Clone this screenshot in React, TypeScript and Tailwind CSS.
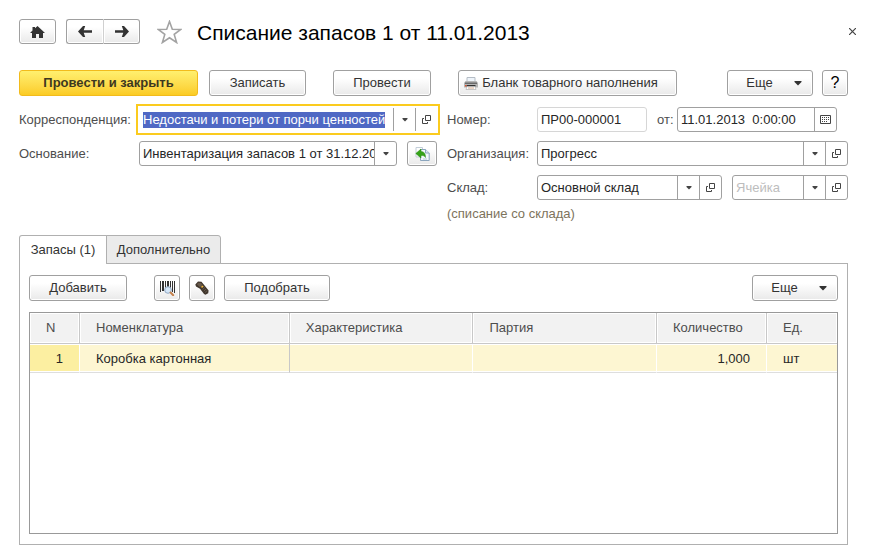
import { useEffect, useRef, type ButtonHTMLAttributes, type ReactNode, type Ref } from "react";

const fieldBox = "flex h-[25px] rounded-[3px] border border-[#a0a0a0] bg-white";
const fieldInput = "w-0 min-w-0 flex-1 bg-transparent pl-[3px] text-[13px] leading-4 text-[#262626] outline-none";
const fieldAction = "flex w-[22px] shrink-0 items-center justify-center border-l border-[#a0a0a0]";

function Button({ className = "", children, ...rest }: ButtonHTMLAttributes<HTMLButtonElement>) {
  return (
    <button
      type="button"
      className={`flex shrink-0 items-center justify-center rounded-[3px] border border-[#a0a0a0] bg-linear-to-b from-white from-30% to-[#e9e9e9] text-[#333] shadow-[inset_0_0_0_1px_#fff] ${className}`}
      {...rest}
    >
      {children}
    </button>
  );
}

function MoreButton() {
  return (
    <Button className="h-[26px] w-[86px] gap-[21px] pl-[8px]" aria-haspopup="menu">
      Еще
      <svg width="8" height="5" viewBox="0 0 8 5" aria-hidden="true">
        <path d="M0.500 0h7v1L4 4.500 0.500 1z" fill="#333" />
      </svg>
    </Button>
  );
}

function DropAction() {
  return (
    <button type="button" aria-label="Выбрать из списка" className={fieldAction}>
      <svg width="6" height="4" viewBox="0 0 6 4" aria-hidden="true">
        <path d="M0.500 0h5v1L3 3.500 0.500 1z" fill="#444" />
      </svg>
    </button>
  );
}

function OpenAction() {
  return (
    <button type="button" aria-label="Открыть" className={fieldAction}>
      <svg width="9" height="9" viewBox="0 0 9 9" fill="none" stroke="#444" aria-hidden="true">
        <path d="M3.500 0.500h5v5h-5zM2 3.500H0.500v5h5V7" />
      </svg>
    </button>
  );
}

function CalendarIcon() {
  return (
    <svg width="11" height="9" viewBox="0 0 11 9" aria-hidden="true">
      <path d="M0.500 0.500h10v8h-10z" fill="none" stroke="#444" />
      <path d="M2 2.500h7M2 4.500h7M2 6.500h5" stroke="#444" strokeDasharray="1 1" />
    </svg>
  );
}

function HomeIcon() {
  return (
    <svg width="15" height="12" viewBox="0 0 15 12" fill="#333" aria-hidden="true">
      <path d="M7.500 0 15 7h-2v5H9V8H6v4H2V7H0L2.500 4.600V1H5v1.300z" />
    </svg>
  );
}

function ArrowIcon({ className = "" }: { className?: string }) {
  return (
    <svg width="14" height="11" viewBox="0 0 14 11" className={className} aria-hidden="true">
      <path d="M0 5.500 5 0h2.200L5.700 4.200H14v2.600H5.700L7.200 11H5z" fill="#333" />
    </svg>
  );
}

function StarIcon() {
  return (
    <svg width="25" height="24" viewBox="0 0 25 24" aria-hidden="true">
      <path
        d="M12.500 1.500 15.300 9.200 23.800 9.400 17.200 14.400 19.600 22.500 12.500 17.800 5.400 22.500 7.800 14.400 1.200 9.400 9.700 9.200z"
        fill="#fff"
        stroke="#a3a3a3"
        strokeWidth="1.600"
      />
    </svg>
  );
}

function PrinterIcon() {
  return (
    <svg width="14" height="13" viewBox="0 0 14 13" aria-hidden="true">
      <path d="M3 0.500h8V5H3z" fill="#eef4fa" stroke="#b4bcc5" />
      <path d="M1.500 4h11L14 6v4.500H0V6z" fill="#b5b5b5" />
      <path d="M1 5.500h12V7H1z" fill="#6a6a6a" />
      <path d="M2.500 8h9v1.500h-9z" fill="#333" />
      <path d="M3 9.500h8l1 3H2z" fill="#fff" stroke="#b0b0b0" strokeWidth="0.700" />
      <path d="M1 8h1.500v1.500H1z" fill="#e0542c" />
      <path d="M4 11h6" stroke="#d3a88b" />
    </svg>
  );
}

function FillIcon() {
  return (
    <svg width="15" height="14" viewBox="0 0 15 14" aria-hidden="true">
      <path d="M1 0.500h6.500V10H1z" fill="#fff" stroke="#c3ced9" />
      <path d="M5.500 2.500h5L14.200 6v7.500H5.500z" fill="#f3f8fc" stroke="#8ba5bd" />
      <path d="M10.500 2.500V6h3.700" fill="#dce8f2" stroke="#8ba5bd" />
      <path d="M0.800 6.500 6 2v2.500c3 0 4.500 2 4.500 6C9.500 8.800 8.500 8.500 6 8.500V11z" fill="#35a318" stroke="#22860d" strokeWidth="0.500" />
      <path d="M8 12h4" stroke="#a9bed0" strokeWidth="0.800" />
    </svg>
  );
}

function BarcodeIcon() {
  return (
    <svg width="15" height="15" viewBox="0 0 15 15" aria-hidden="true">
      <path d="M0 0h1v11H0zM2 0h2v10H2zM5 0h1v10H5zM7 0h2v8H7zM10 0h1v8h-1zM12 0h1v11h-1zM14 0h1v12h-1z" fill="#333" />
      <circle cx="8" cy="9" r="3.300" fill="#d4e6f8" stroke="#92a9c4" />
      <path d="m10.600 11.500 2.600 2.700" stroke="#c4804c" strokeWidth="2" strokeLinecap="round" />
    </svg>
  );
}

function ScannerIcon() {
  return (
    <svg width="14" height="14" viewBox="0 0 14 14" aria-hidden="true">
      <path d="M0.300 3.500 3 0.600 6.500 0.800 13.600 9.500l-0.400 2.800-2.700 1.500-1.500-.8L5 7.800 1 5.600z" fill="#40362c" />
      <path d="M1.800 3.300 3.500 1.700 6 2 7.500 4 5 6.200z" fill="#67594a" />
      <path d="m7.500 8.500 2.300-2M8.800 10l2.300-2M10 11.600l2.300-2" stroke="#7d7062" strokeWidth="0.600" />
      <path d="M6 5.800 7.600 4.400l1 1.200L7 7z" fill="#efb53b" />
    </svg>
  );
}

function TextField({
  id,
  value,
  placeholder,
  className = "",
  inputRef,
  children,
}: {
  id: string;
  value?: string;
  placeholder?: string;
  className?: string;
  inputRef?: Ref<HTMLInputElement>;
  children?: ReactNode;
}) {
  return (
    <div className={`${fieldBox} ${className}`}>
      <input
        id={id}
        ref={inputRef}
        aria-label={placeholder}
        defaultValue={value}
        placeholder={placeholder}
        className={`${fieldInput} placeholder:text-[#bdbdbd]`}
      />
      {children}
    </div>
  );
}

const columns = [
  { title: "N", width: "w-[50px]" },
  { title: "Номенклатура", width: "w-[26%]" },
  { title: "Характеристика", width: "" },
  { title: "Партия", width: "" },
  { title: "Количество", width: "w-[110px]" },
  { title: "Ед.", width: "w-[70px]" },
];

const rows = [{ n: "1", item: "Коробка картонная", feature: "", batch: "", quantity: "1,000", unit: "шт" }];

function StockTable() {
  const cell = "border-b border-b-[#dedede] px-0 py-px";
  const fill = "flex h-[26px] items-center bg-[#fdf6d2] pt-px";
  return (
    <table className="w-full table-fixed border-separate border-spacing-0 text-left text-[13px]">
      <thead>
        <tr>
          {columns.map((c) => (
            <th
              key={c.title}
              scope="col"
              className={`border-r border-b border-[#c8c8c8] p-px font-normal text-[#4d4d4d] last:border-r-0 ${c.width}`}
            >
              <div className="flex h-[28px] items-center bg-[#f2f2f2] pl-[15px]">{c.title}</div>
            </th>
          ))}
        </tr>
      </thead>
      <tbody>
        {rows.map((r) => (
          <tr key={r.n} className="text-[#262626]">
            <td className={`${cell} border-r border-r-white`}>
              <div className="flex h-[26px] items-center justify-end bg-[#fcefa1] pt-px pr-[16px]">{r.n}</div>
            </td>
            <td className={`${cell} border-r border-r-[#c8c8c8]`}>
              <div className={`${fill} pl-[16px]`}>{r.item}</div>
            </td>
            <td className={`${cell} border-r border-r-white`}>
              <div className={`${fill} pl-[16px]`}>{r.feature}</div>
            </td>
            <td className={`${cell} border-r border-r-white`}>
              <div className={`${fill} pl-[16px]`}>{r.batch}</div>
            </td>
            <td className={`${cell} border-r border-r-white`}>
              <div className={`${fill} justify-end pr-[16px]`}>{r.quantity}</div>
            </td>
            <td className={cell}>
              <div className={`${fill} pl-[16px]`}>{r.unit}</div>
            </td>
          </tr>
        ))}
      </tbody>
    </table>
  );
}

export default function App() {
  const accountRef = useRef<HTMLInputElement>(null);

  useEffect(() => {
    accountRef.current?.focus();
    accountRef.current?.select();
  }, []);

  const label = "shrink-0 text-[#4d4d4d]";

  return (
    <div className="flex min-h-screen flex-col bg-white pt-[19px] pr-[26px] pb-[14px] pl-[19px] font-['Liberation_Sans',Arial,sans-serif] text-[13px] leading-4 text-[#333]">
      <header className="flex h-[25px] items-center">
        <Button className="h-[25px] w-[37px]" aria-label="Домой">
          <HomeIcon />
        </Button>
        <div className="ml-[10px] flex">
          <Button className="h-[25px] w-[37px] rounded-r-none border-r-0" aria-label="Назад">
            <ArrowIcon />
          </Button>
          <Button className="h-[25px] w-[37px] rounded-l-none border-l-[#d0d0d0]" aria-label="Вперед">
            <ArrowIcon className="rotate-180" />
          </Button>
        </div>
        <button type="button" aria-label="Избранное" className="ml-[17px]">
          <StarIcon />
        </button>
        <h1 className="ml-[15px] pt-[2px] text-[21px] leading-6 text-black">Списание запасов 1 от 11.01.2013</h1>
        <button type="button" aria-label="Закрыть" className="-mr-2 ml-auto">
          <svg width="7" height="7" viewBox="0 0 7 7" aria-hidden="true">
            <path d="m0 0 7 7M7 0 0 7" stroke="#444" strokeWidth="1.200" />
          </svg>
        </button>
      </header>

      <div className="mt-[26px] flex items-center">
        <button
          type="button"
          className="h-[26px] w-[179px] shrink-0 rounded-[3px] border border-[#f2bb1c] bg-linear-to-b from-[#fff06e] to-[#fbcc22] text-[13px] font-bold text-[#3d3820]"
        >
          Провести и закрыть
        </button>
        <Button className="ml-[11px] h-[26px] w-[97px]">Записать</Button>
        <Button className="ml-[27px] h-[26px] w-[98px]">Провести</Button>
        <Button className="ml-[27px] h-[26px] w-[219px] gap-[4px] pr-[13px]">
          <PrinterIcon />
          Бланк товарного наполнения
        </Button>
        <div className="ml-auto flex gap-[9px]">
          <MoreButton />
          <Button className="h-[26px] w-[26px] text-[16px] text-black" aria-label="Справка">
            ?
          </Button>
        </div>
      </div>

      <form
        className="mt-[11px] grid grid-cols-[minmax(0,418fr)_minmax(0,401fr)] gap-x-[10px]"
        onSubmit={(e) => e.preventDefault()}
      >
        <div className="flex flex-col gap-[9px]">
          <div className="flex h-[25px] items-center">
            <label htmlFor="account" className={`w-[117px] ${label}`}>
              Корреспонденция:
            </label>
            <div className="-mr-[3px] flex h-[31px] min-w-0 flex-1 border-2 border-[#fbcb1e] px-px py-[2px]">
              <input
                id="account"
                ref={accountRef}
                defaultValue="Недостачи и потери от порчи ценностей"
                className="w-0 min-w-0 flex-1 bg-white px-[4px] text-[13px] leading-4 text-[#262626] outline-none selection:bg-[#4f68c4] selection:text-white"
              />
              <DropAction />
              <OpenAction />
            </div>
          </div>
          <div className="flex items-center">
            <label htmlFor="basis" className={`w-[120px] ${label}`}>
              Основание:
            </label>
            <TextField id="basis" value="Инвентаризация запасов 1 от 31.12.20" className="min-w-0 flex-1">
              <DropAction />
            </TextField>
            <Button className="ml-[10px] h-[25px] w-[30px]" aria-label="Заполнить по основанию">
              <FillIcon />
            </Button>
          </div>
        </div>

        <div className="flex flex-col gap-[9px]">
          <div className="flex items-center pr-[11px]">
            <label htmlFor="number" className={`w-[90px] ${label}`}>
              Номер:
            </label>
            <div className="flex h-[25px] min-w-0 flex-1 rounded-[3px] border border-[#d6d6d6]">
              <input id="number" readOnly defaultValue="ПР00-000001" className={fieldInput} />
            </div>
            <label htmlFor="date" className={`ml-[10px] w-[20px] ${label}`}>
              от:
            </label>
            <TextField id="date" value="11.01.2013&nbsp; 0:00:00" className="w-[160px]">
              <button type="button" aria-label="Календарь" className={fieldAction}>
                <CalendarIcon />
              </button>
            </TextField>
          </div>
          <div className="flex items-center">
            <label htmlFor="company" className={`w-[90px] ${label}`}>
              Организация:
            </label>
            <TextField id="company" value="Прогресс" className="min-w-0 flex-1">
              <DropAction />
              <OpenAction />
            </TextField>
          </div>
          <div>
            <div className="flex items-center">
              <label htmlFor="warehouse" className={`w-[90px] ${label}`}>
                Склад:
              </label>
              <TextField id="warehouse" value="Основной склад" className="min-w-0 flex-1">
                <DropAction />
                <OpenAction />
              </TextField>
              <TextField id="cell" placeholder="Ячейка" className="ml-[10px] w-[116px]">
                <DropAction />
                <OpenAction />
              </TextField>
            </div>
            <p className="mt-[6px] text-[#7d735c]">(списание со склада)</p>
          </div>
        </div>
      </form>

      <div role="tablist" className="z-10 mt-[13px] -mb-px flex h-[29px]">
        <button
          type="button"
          role="tab"
          aria-selected="true"
          className="w-[88px] rounded-tl-[3px] border border-b-0 border-[#b0b0b0] bg-white text-[#333]"
        >
          Запасы (1)
        </button>
        <button
          type="button"
          role="tab"
          aria-selected="false"
          className="-ml-px w-[115px] rounded-tr-[3px] border border-[#b0b0b0] bg-[#ebebeb] text-[#333]"
        >
          Дополнительно
        </button>
      </div>
      <section role="tabpanel" className="flex flex-1 flex-col border border-[#b0b0b0] px-[9px] pt-[11px] pb-[10px]">
        <div className="flex items-center">
          <Button className="h-[26px] w-[98px]">Добавить</Button>
          <Button className="ml-[27px] h-[26px] w-[26px]" aria-label="Поиск по штрихкоду">
            <BarcodeIcon />
          </Button>
          <Button className="ml-[9px] h-[26px] w-[26px]" aria-label="Терминал сбора данных">
            <ScannerIcon />
          </Button>
          <Button className="ml-[9px] h-[26px] w-[106px]">Подобрать</Button>
          <div className="ml-auto">
            <MoreButton />
          </div>
        </div>
        <div className="mt-[11px] flex-1 border border-[#999]">
          <StockTable />
        </div>
      </section>
    </div>
  );
}
